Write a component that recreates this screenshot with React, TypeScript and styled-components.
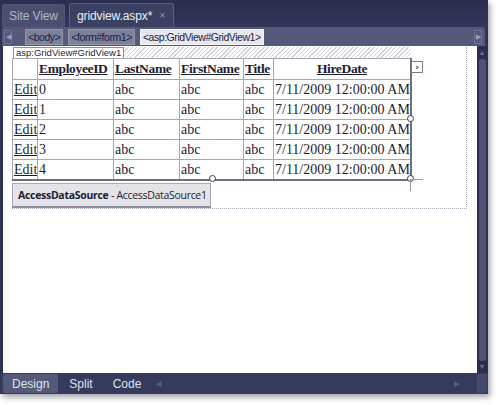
import React from "react";
import styled, { createGlobalStyle } from "styled-components";

const GlobalStyle = createGlobalStyle`
    html, body {
        margin: 0;
        padding: 0;
        background: #ffffff;
    }
`;

const Page = styled.div`
    width: 500px;
    height: 405px;
    overflow: hidden;
`;

const Window = styled.div`
    width: 488px;
    height: 394px;
    background: #2e3355;
    display: flex;
    flex-direction: column;
    box-shadow: 2px 3px 6px rgba(40, 40, 60, 0.45);
    font-family: "Liberation Sans", Arial, sans-serif;
`;

const TabBar = styled.div`
    height: 27px;
    display: flex;
    align-items: flex-end;
    gap: 4px;
    padding-left: 2px;
    box-sizing: border-box;
    background: linear-gradient(#2a2f50, #323759);
`;

const Tab = styled.div<{ $active?: boolean }>`
    height: ${(p) => (p.$active ? "24px" : "23px")};
    padding: 0 ${(p) => (p.$active ? "7px" : "6px")};
    display: flex;
    align-items: center;
    gap: 7px;
    box-sizing: border-box;
    border-radius: 3px 3px 0 0;
    font-size: 12px;
    letter-spacing: -0.1px;
    color: ${(p) => (p.$active ? "#eceef6" : "#b3b6c8")};
    background: ${(p) => (p.$active ? "#3b4062" : "#4b4f6f")};
    border: 1px solid ${(p) => (p.$active ? "#5b5f80" : "#50547a")};
    border-bottom: none;
`;

const Close = styled.span`
    font-size: 8px;
    color: #8d91aa;
`;

const Crumbs = styled.div`
    height: 19px;
    margin: 0 3px 0 2px;
    display: flex;
    align-items: center;
    gap: 5px;
    padding: 0 2px;
    box-sizing: border-box;
    background: #55597b;
    border-radius: 3px 3px 0 0;
`;

const Arrow = styled.div<{ $right?: boolean }>`
    width: 8px;
    height: 14px;
    display: flex;
    align-items: center;
    justify-content: center;
    font-size: 7px;
    color: #9da1b8;
    border: 1px solid #6d7192;
    box-sizing: border-box;
    margin-left: ${(p) => (p.$right ? "auto" : "0")};
    margin-right: ${(p) => (p.$right ? "1px" : "8px")};
`;

const Crumb = styled.div<{ $current?: boolean }>`
    height: 16px;
    padding: 0 2px;
    display: flex;
    align-items: center;
    box-sizing: border-box;
    font-size: 10.5px;
    letter-spacing: -0.45px;
    color: #1e2140;
    background: ${(p) => (p.$current ? "#e6e7ee" : "#7d8199")};
    border: 1px solid ${(p) => (p.$current ? "#f4f4f8" : "#9195ad")};
`;

const Main = styled.div`
    flex: 1;
    display: flex;
    padding-left: 3px;
    padding-right: 1px;
`;

const Canvas = styled.div`
    flex: 1;
    background: #ffffff;
    padding: 1px 0 0 9px;
`;

const Designer = styled.div`
    position: relative;
    width: 455px;
    box-sizing: border-box;
    border-right: 1px dotted #a8a8b4;
    border-bottom: 1px dotted #a8a8b4;
`;

const LabelRow = styled.div`
    display: flex;
    height: 11px;
    width: 399px;
`;

const ControlLabel = styled.div`
    padding: 0 2px;
    font-size: 9.5px;
    line-height: 10px;
    color: #1d1f35;
    border: 1px solid #8e8e9e;
    border-bottom: none;
    background: #fff;
    margin-left: 1px;
`;

const Hatch = styled.div`
    flex: 1;
    background: repeating-linear-gradient(
        -45deg,
        #cfcfd8 0 1px,
        #ffffff 1px 3px
    );
`;

const Grid = styled.table`
    border-collapse: collapse;
    table-layout: fixed;
    width: 400px;
    font-family: "Liberation Serif", "Times New Roman", serif;
    font-size: 14px;
    color: #1c1e33;
    border: 2px solid #6e7080;
    border-top: 1px solid #9a9aaa;
    border-left: 1px solid #9a9aaa;
`;

const Head = styled.th<{ $align?: string }>`
    height: 20px;
    padding: 0 1px;
    text-align: ${(p) => p.$align || "left"};
    font-size: 13.5px;
    letter-spacing: -0.35px;
    font-weight: bold;
    text-decoration: underline;
    border: 1px solid #a6a6b4;
    white-space: nowrap;
    overflow: hidden;
`;

const Cell = styled.td<{ $link?: boolean }>`
    height: 19px;
    padding: 0 1px;
    border: 1px solid #a6a6b4;
    white-space: nowrap;
    overflow: hidden;
    text-decoration: ${(p) => (p.$link ? "underline" : "none")};
`;

const SmartTag = styled.div`
    position: absolute;
    left: 399px;
    top: 14px;
    width: 10px;
    height: 10px;
    border: 1px solid #7a7a8c;
    background: #fff;
    display: flex;
    align-items: center;
    justify-content: center;
    font-family: "DejaVu Sans", sans-serif;
    font-size: 9px;
    font-weight: bold;
    color: #333;
`;

const Handle = styled.div`
    position: absolute;
    width: 5px;
    height: 5px;
    border: 1px solid #3c3c50;
    border-radius: 50%;
    background: #fff;
`;

const Guide = styled.div<{ $vertical?: boolean }>`
    position: absolute;
    background: #9a9aaa;
    width: ${(p) => (p.$vertical ? "1px" : "12px")};
    height: ${(p) => (p.$vertical ? "12px" : "1px")};
`;

const DataSource = styled.div`
    margin: 2px 0 0 0;
    width: 199px;
    height: 25px;
    box-sizing: border-box;
    padding-left: 5px;
    display: flex;
    align-items: center;
    white-space: nowrap;
    font-family: "Open Sans", "DejaVu Sans", sans-serif;
    font-size: 10.5px;
    letter-spacing: -0.3px;
    color: #1b1d30;
    background: #e3e3e8;
    border: 1px solid #a9a9b6;
    border-bottom: 2px solid #8c8c9a;
`;

const VScroll = styled.div`
    width: 10px;
    display: flex;
    flex-direction: column;
    align-items: center;
    background: #2a2f4f;
    padding: 3px 0 2px;
    box-sizing: border-box;
`;

const ScrollArrow = styled.div`
    font-size: 7px;
    line-height: 8px;
    color: #6e7394;
`;

const Thumb = styled.div`
    flex: 1;
    width: 7px;
    margin: 2px 0;
    border-radius: 3px;
    background: #4f5476;
`;

const BottomBar = styled.div`
    height: 21px;
    display: flex;
    align-items: center;
    gap: 2px;
    padding: 0 1px 0 3px;
    background: #363b5d;
`;

const ViewTab = styled.div<{ $active?: boolean }>`
    height: 19px;
    padding: 0 9px;
    display: flex;
    align-items: center;
    font-size: 12px;
    color: #dfe1ec;
    background: ${(p) => (p.$active ? "#555a7a" : "transparent")};
    border-radius: 2px;
`;

const HScroll = styled.div`
    flex: 1;
    display: flex;
    align-items: center;
    justify-content: space-between;
    padding: 0 16px 0 4px;
    font-size: 7px;
    color: #5c6082;
`;

const Corner = styled.div`
    width: 10px;
    height: 19px;
    background: #454a6b;
    border-radius: 0 0 3px 0;
`;

const rows = [0, 1, 2, 3, 4];

export default function App() {
    return (
        <Page>
            <GlobalStyle />
            <Window>
                <TabBar>
                    <Tab>Site View</Tab>
                    <Tab $active>
                        gridview.aspx* <Close>✕</Close>
                    </Tab>
                </TabBar>
                <Crumbs>
                    <Arrow>◀</Arrow>
                    <Crumb>&lt;body&gt;</Crumb>
                    <Crumb>&lt;form#form1&gt;</Crumb>
                    <Crumb $current>&lt;asp:GridView#GridView1&gt;</Crumb>
                    <Arrow $right>▶</Arrow>
                </Crumbs>
                <Main>
                    <Canvas>
                        <Designer>
                            <LabelRow>
                                <ControlLabel>asp:GridView#GridView1</ControlLabel>
                                <Hatch />
                            </LabelRow>
                            <Grid>
                                <colgroup>
                                    <col style={{ width: 25 }} />
                                    <col style={{ width: 76 }} />
                                    <col style={{ width: 66 }} />
                                    <col style={{ width: 64 }} />
                                    <col style={{ width: 30 }} />
                                    <col />
                                </colgroup>
                                <thead>
                                    <tr>
                                        <Head />
                                        <Head>EmployeeID</Head>
                                        <Head>LastName</Head>
                                        <Head>FirstName</Head>
                                        <Head>Title</Head>
                                        <Head $align="center">HireDate</Head>
                                    </tr>
                                </thead>
                                <tbody>
                                    {rows.map((n) => (
                                        <tr key={n}>
                                            <Cell $link>Edit</Cell>
                                            <Cell>{n}</Cell>
                                            <Cell>abc</Cell>
                                            <Cell>abc</Cell>
                                            <Cell>abc</Cell>
                                            <Cell>7/11/2009 12:00:00 AM</Cell>
                                        </tr>
                                    ))}
                                </tbody>
                            </Grid>
                            <SmartTag>›</SmartTag>
                            <Handle style={{ left: 395, top: 68 }} />
                            <Handle style={{ left: 197, top: 128 }} />
                            <Handle style={{ left: 395, top: 128 }} />
                            <Guide style={{ left: 399, top: 132 }} />
                            <Guide $vertical style={{ left: 398, top: 132 }} />
                            <DataSource>
                                <b>AccessDataSource</b>&nbsp;- AccessDataSource1
                            </DataSource>
                        </Designer>
                    </Canvas>
                    <VScroll>
                        <ScrollArrow>▲</ScrollArrow>
                        <Thumb />
                        <ScrollArrow>▼</ScrollArrow>
                    </VScroll>
                </Main>
                <BottomBar>
                    <ViewTab $active>Design</ViewTab>
                    <ViewTab>Split</ViewTab>
                    <ViewTab>Code</ViewTab>
                    <HScroll>
                        <span>◀</span>
                        <span>▶</span>
                    </HScroll>
                    <Corner />
                </BottomBar>
            </Window>
        </Page>
    );
}
